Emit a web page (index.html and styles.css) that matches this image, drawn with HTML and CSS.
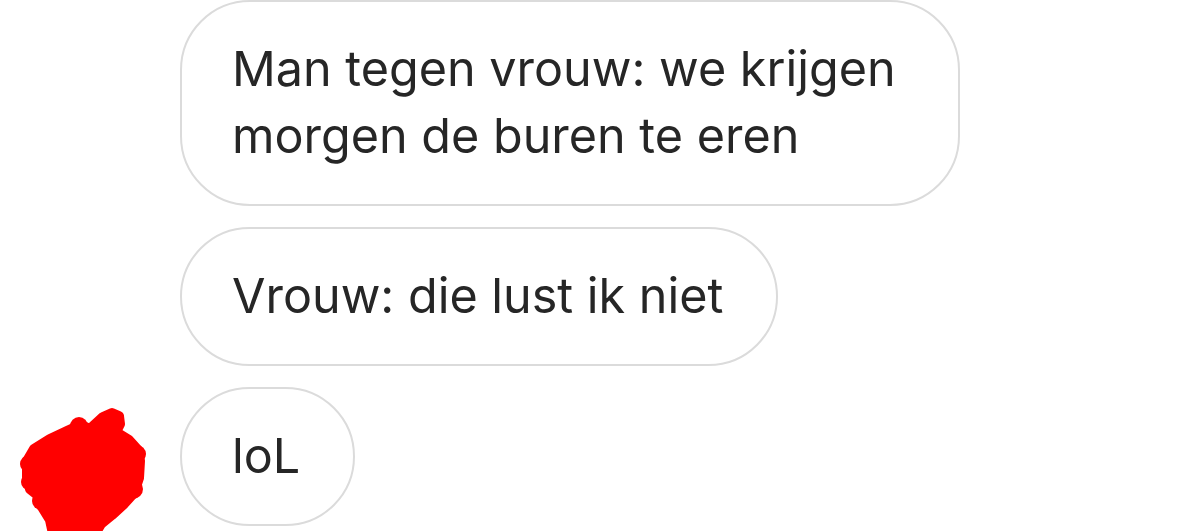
FILE: index.html
```html
<!DOCTYPE html>
<html lang="nl">
<head>
    <meta charset="UTF-8">
    <meta name="viewport" content="width=device-width, initial-scale=1.0">
    <title>Chat</title>
    <link rel="stylesheet" href="styles.css">
</head>
<body>

<div class="thread">
    <!-- incoming messages -->
    <div class="row">
        <div class="avatar"></div>
        <div class="bubble">Man tegen vrouw: we krijgen morgen de buren te eren</div>
    </div>

    <div class="row">
        <div class="avatar"></div>
        <div class="bubble">Vrouw: die lust ik niet</div>
    </div>

    <div class="row">
        <div class="avatar">
            <!-- scribbled-out profile picture -->
            <svg class="scribble" width="135" height="130" viewBox="0 -8 135 130">
                <g fill="#ff0000" stroke="#ff0000" stroke-width="10" stroke-linejoin="round" stroke-linecap="round">
                    <path d="M12 57 L19 45 L35 35 L52 27 L65 21 L75 25 L88 13 L97 9 L104 12 L105 20 L101 28 L114 36 L123 46 L125 57 L124 74 L119 89 L109 100 L97 111 L86 120 L80 130 L38 130 L35 116 L27 103 L25 93 L15 85 L12 73 Z"/>
                    <line x1="88" y1="14" x2="104" y2="13" />
                </g>
                <g fill="#ff0000">
                    <circle cx="14" cy="60" r="9"/>
                    <circle cx="14" cy="78" r="8"/>
                    <circle cx="26" cy="97" r="9"/>
                    <circle cx="40" cy="118" r="9"/>
                    <circle cx="122" cy="50" r="9"/>
                    <circle cx="118" cy="85" r="10"/>
                    <circle cx="64" cy="22" r="9"/>
                </g>
            </svg>
        </div>
        <div class="bubble">loL</div>
    </div>
</div>

</body>
</html>
```

FILE: styles.css
```css
body {
    margin: 0;
    padding: 0;
    background-color: #fff;
    font-family: Inter, "Noto Sans", sans-serif;
    color: #262626;
    overflow: hidden;
}
.thread {
    padding: 0 0 20px 20px;
    display: flex;
    flex-direction: column;
    gap: 21px;
}
.row {
    display: flex;
    align-items: flex-end;
}
.avatar {
    width: 125px;
    margin-right: 35px;
    flex-shrink: 0;
    display: flex;
    align-items: flex-end;
}
.scribble {
    display: block;
    overflow: visible;
    margin-left: -5px;
}
.bubble {
    box-sizing: border-box;
    max-width: 780px;
    padding: 33px 53px 35px 50px;
    border: 2px solid #dbdbdb;
    border-radius: 70px;
    font-size: 48.5px;
    line-height: 67px;
}
```
